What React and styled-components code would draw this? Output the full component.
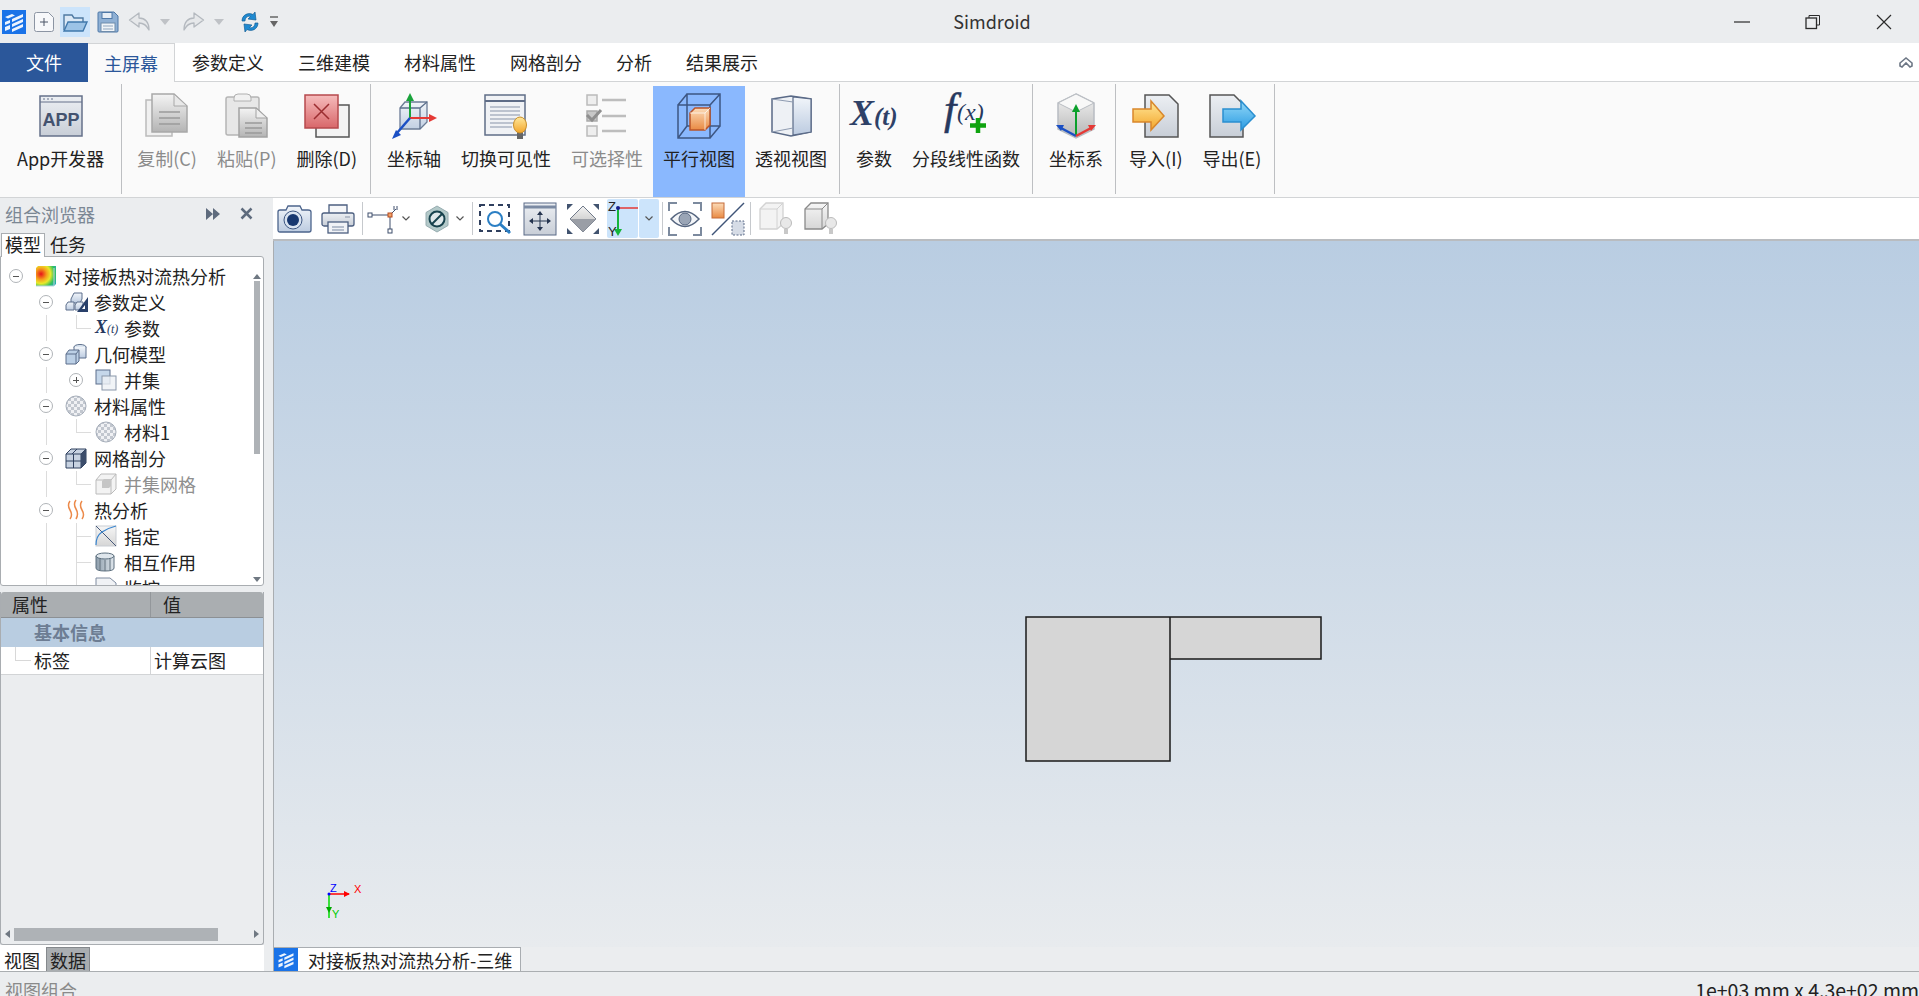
import React from "react";
import styled, { createGlobalStyle } from "styled-components";

const FONT = `"Noto Sans CJK SC", "Noto Sans", sans-serif`;

const GlobalStyle = createGlobalStyle`
    html, body { margin: 0; padding: 0; height: 100%; overflow: hidden; background: #ebedef; }
    #root { height: 100%; }
    * { box-sizing: border-box; }
`;

// icons
const Ico = styled.svg`
    display: block;
    flex: none;
    overflow: visible;
`;
const DefsSvg = styled.svg`
    position: absolute;
    width: 0;
    height: 0;
`;
const Grad = ({ id, from, to, x2 = 0, y2 = 1 }) => (
    <linearGradient id={id} x1="0" y1="0" x2={x2} y2={y2}>
        <stop offset="0" stopColor={from} />
        <stop offset="1" stopColor={to} />
    </linearGradient>
);
const SharedDefs = () => (
    <DefsSvg aria-hidden="true">
        <defs>
            <Grad id="gGlass" from="#f1f5fa" to="#bccbe0" />
            <Grad id="gGrey" from="#f4f4f4" to="#b4b4b4" />
            <Grad id="gLight" from="#f6f6f6" to="#d6d6d6" />
            <Grad id="gOrange" from="#fcdcb9" to="#e98a43" />
            <Grad id="gRed" from="#f6bcbc" to="#d8676a" />
            <Grad id="gYellow" from="#ffe89a" to="#f3a52a" />
            <Grad id="gSky" from="#92d8f8" to="#2b9be2" />
            <Grad id="gDoc" from="#eceff3" to="#c8ced7" />
            <Grad id="gCyl" from="#8d9dab" to="#dfe6ec" x2={1} y2={0} />
            <radialGradient id="gHeat" cx="0.25" cy="0.4" r="0.95">
                <stop offset="0" stopColor="#e8121a" />
                <stop offset="0.3" stopColor="#f5a11c" />
                <stop offset="0.5" stopColor="#e9e82a" />
                <stop offset="0.72" stopColor="#35c25a" />
                <stop offset="1" stopColor="#1c9fd8" />
            </radialGradient>
        </defs>
    </DefsSvg>
);

const AppLogo = ({ size = 24 }) => (
    <Ico width={size} height={size} viewBox="0 0 24 24">
        <rect width="24" height="24" fill="#1a73e8" />
        <path d="M3 7l7-3 3 1.500-7 3zM3 12l5-2v3l-5 2zM3 17l5-2v4l-5 2z" fill="#fff" opacity=".92" />
        <path d="M10 9l11-5v3l-11 5zM10 14l11-5v3l-11 5zM10 19l11-5v3l-11 5z" fill="#fff" opacity=".92" />
    </Ico>
);
const NewDocIcon = () => (
    <Ico width="22" height="22" viewBox="0 0 22 22">
        <path d="M1.500 3.500q0-2 2-2h12l5 5v12q0 2-2 2h-15q-2 0-2-2z" fill="#f7f8fa" stroke="#8c95a3" />
        <path d="M11 7v8M7 11h8" stroke="#4b5566" />
    </Ico>
);
const OpenIcon = () => (
    <Ico width="26" height="22" viewBox="0 0 26 22">
        <path d="M2 19V4h8l2 3h9v4" fill="#dbe8f5" stroke="#4f7aa3" strokeWidth="1.400" />
        <path d="M2 20l4-9h19l-4 9z" fill="#9cc3e6" stroke="#3f78ac" strokeWidth="1.400" />
    </Ico>
);
const SaveIcon = () => (
    <Ico width="22" height="22" viewBox="0 0 22 22">
        <path d="M1 2q0-1 1-1h15l4 4v15q0 1-1 1H2q-1 0-1-1z" fill="#8fb0d4" stroke="#4f79a8" />
        <rect x="5" y="1.500" width="10" height="6" fill="#e7eef6" stroke="#4f79a8" />
        <rect x="4" y="12" width="14" height="8.500" fill="#f0f4f8" stroke="#6e8cab" />
        <path d="M6 15h10M6 18h10" stroke="#8fa5bd" />
    </Ico>
);
const UndoIcon = ({ flip }) => (
    <Ico width="23" height="22" viewBox="0 0 23 22" style={flip ? { transform: "scaleX(-1)" } : undefined}>
        <path d="M11 2L1.500 9l9.500 7v-4c4 0 7 1 10 7 0-8-4-12-10-12z" fill="#e6e8ea" stroke="#b4b9bf" strokeWidth="1.300" strokeLinejoin="round" />
    </Ico>
);
const RefreshIcon = () => (
    <Ico width="20" height="24" viewBox="0 0 20 24">
        <path d="M2 11C2 5 8 2 13 4.500L15 2l1 8-8-1 2.500-2.500C8 5.500 5 7.500 5 11z" fill="#1f8ad1" stroke="#155f95" strokeWidth=".7" />
        <path d="M18 13c0 6-6 9-11 6.500L5 22l-1-8 8 1-2.500 2.500C12 18.500 15 16.500 15 13z" fill="#1f8ad1" stroke="#155f95" strokeWidth=".7" />
    </Ico>
);
const MoreIcon = () => (
    <Ico width="10" height="14" viewBox="0 0 10 14">
        <path d="M1 2h8" stroke="#666" strokeWidth="1.500" />
        <path d="M1 6h8l-4 6z" fill="#666" />
    </Ico>
);
const DropTri = () => (
    <Ico width="10" height="8" viewBox="0 0 10 8">
        <path d="M0 1h10L5 7z" fill="#bfc2c6" />
    </Ico>
);

const RibbonApp = () => (
    <Ico width="48" height="48" viewBox="0 0 48 48">
        <rect x="3" y="4" width="42" height="40" fill="url(#gDoc)" stroke="#65718a" strokeWidth="1.500" />
        <path d="M3 10h42" stroke="#65718a" />
        <path d="M6 7h2M10 7h2M14 7h2" stroke="#65718a" />
        <text x="24" y="34" textAnchor="middle" fontFamily="Liberation Sans" fontWeight="700" fontSize="18" fill="#43526f">APP</text>
    </Ico>
);
const RibbonCopy = () => (
    <Ico width="48" height="48" viewBox="0 0 48 48">
        <path d="M3 8h26v36H3z" fill="#f0f0f0" stroke="#bbb" strokeWidth="1.500" />
        <path d="M9 2h22l13 12v26H9z" fill="url(#gGrey)" stroke="#a8a8a8" strokeWidth="1.500" />
        <path d="M31 2v12h13z" fill="#e8e8e8" stroke="#a8a8a8" />
        <path d="M16 20h21M16 26h21M16 32h21" stroke="#9a9a9a" strokeWidth="1.500" />
    </Ico>
);
const RibbonPaste = () => (
    <Ico width="48" height="48" viewBox="0 0 48 48">
        <rect x="3" y="5" width="33" height="38" rx="2" fill="#e7e7e7" stroke="#b5b5b5" strokeWidth="1.500" />
        <path d="M11 6q0-4 4-4h9q4 0 4 4v3H11z" fill="#f1f1f1" stroke="#b0b0b0" />
        <path d="M16 16h17l11 10v19H16z" fill="url(#gGrey)" stroke="#a2a2a2" strokeWidth="1.500" />
        <path d="M33 16v10h11z" fill="#eee" stroke="#a2a2a2" />
        <path d="M22 31h17M22 36h17M22 41h17" stroke="#999" strokeWidth="1.300" />
    </Ico>
);
const RibbonDelete = () => (
    <Ico width="48" height="48" viewBox="0 0 48 48">
        <rect x="13" y="13" width="33" height="32" fill="#f3f3f3" stroke="#555" strokeWidth="1.500" />
        <rect x="2" y="3" width="33" height="33" fill="url(#gRed)" stroke="#b64a4d" strokeWidth="1.500" />
        <path d="M11 12l15 15M26 12L11 27" stroke="#9b2d30" strokeWidth="1.500" />
    </Ico>
);
const RibbonAxis = () => (
    <Ico width="48" height="48" viewBox="0 0 48 48">
        <path d="M10 16l5-6h22v20l-7 7H10z" fill="url(#gGlass)" stroke="#5c6f8c" strokeWidth="1.300" opacity=".9" />
        <path d="M10 16h20v21M30 16l7-6" fill="none" stroke="#5c6f8c" strokeWidth="1.300" />
        <path d="M20 26V8" stroke="#19a33b" strokeWidth="2" />
        <path d="M20 1l-4 8h8z" fill="#19a33b" />
        <path d="M20 26h21" stroke="#e53935" strokeWidth="2" />
        <path d="M47 26l-8-4v8z" fill="#e53935" />
        <path d="M20 26L7 41" stroke="#1a4fc4" strokeWidth="2.500" />
        <path d="M2 47l9-4-5-5z" fill="#1a4fc4" />
    </Ico>
);
const RibbonVisibility = () => (
    <Ico width="48" height="48" viewBox="0 0 48 48">
        <rect x="3" y="3" width="40" height="40" fill="#f0f2f5" stroke="#5f6d87" strokeWidth="1.500" />
        <path d="M3 9h40" stroke="#5f6d87" strokeWidth="2" />
        <path d="M8 15h30M8 19h30M8 23h30M8 27h30M8 31h24M8 35h22" stroke="#aab4c2" strokeWidth="1.500" />
        <path d="M35 40h6v7h-6z" fill="#666" />
        <ellipse cx="38" cy="33" rx="6.500" ry="8" fill="url(#gYellow)" stroke="#c98f2a" />
    </Ico>
);
const RibbonSelectable = () => (
    <Ico width="48" height="48" viewBox="0 0 48 48">
        <rect x="4" y="3" width="10" height="10" fill="#eee" stroke="#bbb" strokeWidth="1.500" />
        <rect x="4" y="19" width="10" height="10" fill="#c8c8c8" stroke="#aaa" strokeWidth="1.500" />
        <path d="M4 23l5 5 9-10" fill="none" stroke="#8f8f8f" strokeWidth="3" />
        <rect x="4" y="34" width="10" height="10" fill="#eee" stroke="#bbb" strokeWidth="1.500" />
        <path d="M19 8h24M19 24h24M19 39h24" stroke="#bdbdbd" strokeWidth="2.500" />
    </Ico>
);
const RibbonParallel = () => (
    <Ico width="48" height="48" viewBox="0 0 48 48">
        <g fill="none" stroke="#3d5683" strokeWidth="1.500">
            <path d="M12 2h33v32H12zM3 13h32v33H3zM3 13l9-11M35 13l10-11M3 46l9-12M35 46l10-12" />
        </g>
        <path d="M15 21l5-5h15v17l-5 5H15z" fill="url(#gOrange)" stroke="#b9542a" strokeWidth="1.500" />
        <path d="M15 21h15v17M30 21l5-5" fill="none" stroke="#fff" strokeWidth="1" opacity=".7" />
    </Ico>
);
const RibbonPerspective = () => (
    <Ico width="48" height="48" viewBox="0 0 48 48">
        <path d="M5 7l19-3 20 3v33l-20 4-19-4z" fill="#eef1f5" stroke="#5a6a87" strokeWidth="1.500" />
        <path d="M26 5v38l18-3V7z" fill="url(#gGlass)" stroke="#5a6a87" strokeWidth="1.200" />
        <path d="M5 7l21 3M5 40l21-4" stroke="#8e9bb1" />
    </Ico>
);
const RibbonXt = () => (
    <Ico width="48" height="48" viewBox="0 0 48 48">
        <text x="0" y="33" fontFamily="Liberation Serif" fontStyle="italic" fontWeight="700" fontSize="36" fill="#2e4167">X</text>
        <text x="24" y="33" fontFamily="Liberation Serif" fontStyle="italic" fontWeight="700" fontSize="25" fill="#2e4167">(t)</text>
    </Ico>
);
const RibbonFx = () => (
    <Ico width="48" height="48" viewBox="0 0 48 48">
        <text x="2" y="32" fontFamily="Liberation Serif" fontStyle="italic" fontSize="44" fill="#26395f" stroke="#26395f" strokeWidth=".5">f</text>
        <text x="15" y="28" fontFamily="Liberation Serif" fontStyle="italic" fontSize="24" fill="#26395f">(x)</text>
        <path d="M36 26v15M28 33.500h16" stroke="#0fa30f" strokeWidth="4.500" />
    </Ico>
);
const RibbonCoord = () => (
    <Ico width="48" height="48" viewBox="0 0 48 48">
        <path d="M24 2l18 9v26l-18 9-18-9V11z" fill="url(#gGrey)" stroke="#b8bcc2" strokeWidth="1.500" />
        <path d="M6 11l18 9 18-9-18-9z" fill="#f8f8f8" stroke="#b8bcc2" />
        <path d="M24 44V18" stroke="#0ca02c" strokeWidth="2" />
        <path d="M24 12l-4 8h8z" fill="#0ca02c" />
        <path d="M24 44L9 36" stroke="#1a4fc4" strokeWidth="2.500" />
        <path d="M4 33l8 0-3 6z" fill="#1a4fc4" />
        <path d="M24 44l15-8" stroke="#e53935" strokeWidth="2.500" />
        <path d="M44 33l-8 0 3 6z" fill="#e53935" />
    </Ico>
);
const RibbonImport = () => (
    <Ico width="48" height="48" viewBox="0 0 48 48">
        <path d="M13 3h24l9 9v33H13z" fill="url(#gDoc)" stroke="#555" strokeWidth="1.500" />
        <path d="M1 17h18V9l13 15-13 14v-8H1z" fill="url(#gYellow)" stroke="#d9872b" strokeWidth="1.500" />
    </Ico>
);
const RibbonExport = () => (
    <Ico width="48" height="48" viewBox="0 0 48 48">
        <path d="M2 3h24l9 9v33H2z" fill="url(#gDoc)" stroke="#555" strokeWidth="1.500" />
        <path d="M15 17h18V9l14 15-14 14v-8H15z" fill="url(#gSky)" stroke="#2a8fd0" strokeWidth="1.500" />
    </Ico>
);

const CameraIcon = () => (
    <Ico width="34" height="28" viewBox="0 0 34 28">
        <path d="M1 7q0-2 2-2h6l2-4h12l2 4h6q3 0 3 2v18q0 2-2 2H3q-2 0-2-2z" fill="url(#gGlass)" stroke="#4c648c" strokeWidth="1.300" />
        <circle cx="16" cy="15" r="9" fill="#d9e3f0" stroke="#3c5580" />
        <circle cx="16" cy="15" r="6" fill="#17376f" />
    </Ico>
);
const PrinterIcon = () => (
    <Ico width="34" height="30" viewBox="0 0 34 30">
        <path d="M8 9V1h18v8" fill="#f6f7f9" stroke="#4c5f80" strokeWidth="1.300" />
        <rect x="1" y="9" width="32" height="13" rx="2" fill="url(#gDoc)" stroke="#4c5f80" strokeWidth="1.300" />
        <rect x="7" y="18" width="20" height="11" fill="#f0f2f6" stroke="#4c5f80" strokeWidth="1.300" />
        <path d="M11 23h12M11 26h12" stroke="#7a8aa3" />
        <path d="M24 13h5" stroke="#8793a7" />
    </Ico>
);
const PickIcon = () => (
    <Ico width="31" height="28" viewBox="0 0 31 28">
        <path d="M3 10h20M23 10v14M23 10l6-6" stroke="#3e4f6d" fill="none" />
        <rect x="1" y="8" width="4" height="4" fill="#fff" stroke="#3e4f6d" />
        <rect x="21" y="24" width="4" height="4" fill="#fff" stroke="#3e4f6d" />
        <rect x="21" y="8" width="4" height="4" fill="#f0a468" stroke="#b5491f" />
        <path d="M27 1v4M30 1v4" stroke="#3e4f6d" />
    </Ico>
);
const HexIcon = () => (
    <Ico width="24" height="28" viewBox="0 0 24 28">
        <path d="M12 1l11 6.500v13L12 27 1 20.500v-13z" fill="#b3c9c9" stroke="#96acb0" />
        <circle cx="12" cy="14" r="7.500" fill="#dfe8ea" stroke="#17424d" strokeWidth="2" />
        <path d="M7 19L17 9" stroke="#17424d" strokeWidth="2" />
    </Ico>
);
const ZoomRectIcon = () => (
    <Ico width="34" height="32" viewBox="0 0 34 32">
        <rect x="1" y="2" width="29" height="26" fill="none" stroke="#2f3f5e" strokeWidth="2" strokeDasharray="5 4" />
        <circle cx="16" cy="16" r="7" fill="#fff" stroke="#2b7fc4" strokeWidth="2" />
        <path d="M21 21l10 9" stroke="#2b7fc4" strokeWidth="3" />
    </Ico>
);
const PanIcon = () => (
    <Ico width="34" height="34" viewBox="0 0 34 34">
        <rect x="1" y="1" width="32" height="32" fill="url(#gDoc)" stroke="#5a6a87" />
        <path d="M1 5h32" stroke="#7b8aa3" strokeWidth="3" />
        <path d="M17 9l-3 4h6zM17 29l-3-4h6zM6 19l4-3v6zM28 19l-4-3v6z" fill="#25344f" />
        <path d="M17 12v14M9 19h16" stroke="#25344f" />
    </Ico>
);
const FitIcon = () => (
    <Ico width="36" height="34" viewBox="0 0 36 34">
        <path d="M18 4l13 13-13 13L5 17z" fill="url(#gGrey)" stroke="#707a8a" />
        <path d="M5 17h26L18 30z" fill="#9a9ea6" />
        <path d="M2 2l6 0-6 6zM34 2l-6 0 6 6zM2 32l6 0-6-6zM34 32l-6 0 6-6z" fill="#41536f" />
    </Ico>
);
const TriadBtnIcon = () => (
    <Ico width="31" height="38" viewBox="0 0 31 38">
        <path d="M11 8h20" stroke="#e53935" strokeWidth="1.500" />
        <path d="M11 8v23" stroke="#14b53a" strokeWidth="2" />
        <path d="M11 36l-4-7h8z" fill="#14b53a" />
        <circle cx="11" cy="8" r="2" fill="#15208f" />
        <text x="1" y="11" fontFamily="Liberation Sans" fontSize="13" fill="#222">Z</text>
        <text x="1" y="36" fontFamily="Liberation Sans" fontSize="13" fill="#222">Y</text>
    </Ico>
);
const EyeIcon = () => (
    <Ico width="34" height="34" viewBox="0 0 34 34">
        <path d="M1 9V1h8M25 1h8v8M33 25v8h-8M9 33H1v-8" fill="none" stroke="#7c8a9e" strokeWidth="2" />
        <path d="M3 17q14-15 28 0-14 15-28 0z" fill="#f3f5f8" stroke="#55657f" strokeWidth="1.500" />
        <circle cx="17" cy="17" r="6" fill="#9aa5b6" stroke="#55657f" />
    </Ico>
);
const OrthoSwapIcon = () => (
    <Ico width="34" height="34" viewBox="0 0 34 34">
        <rect x="1" y="1" width="12" height="15" fill="url(#gOrange)" stroke="#c46a38" />
        <path d="M33 1L1 33" stroke="#3f5478" strokeWidth="1.500" />
        <rect x="21" y="19" width="12" height="14" fill="#d6dce6" stroke="#5a6a87" strokeDasharray="2 1.500" />
    </Ico>
);
const LightBox = ({ dark }) => (
    <Ico width="34" height="34" viewBox="0 0 34 34">
        <path d="M1 7l6-6h17v21l-6 5H1z" fill={dark ? "url(#gLight)" : "#f3f3f3"} stroke={dark ? "#8a8a8a" : "#d2d2d2"} strokeWidth="1.300" />
        <path d="M1 7h17v20M18 7l6-6" fill="none" stroke={dark ? "#8a8a8a" : "#d2d2d2"} />
        <circle cx="27" cy="21" r="5.500" fill="#e8e8e8" stroke="#bbb" />
        <path d="M25 27h4v5h-4z" fill="#c8c8c8" />
    </Ico>
);
const Chevron = () => (
    <Ico width="8" height="5" viewBox="0 0 8 5">
        <path d="M.5.5L4 4 7.500.5" fill="none" stroke="#555" strokeWidth="1.200" />
    </Ico>
);

const TreeHeat = () => (
    <Ico width="22" height="22" viewBox="0 0 22 22">
        <path d="M1 3l2-2h18v18l-2 2H1z" fill="url(#gHeat)" />
        <path d="M1 21h18V3" fill="none" stroke="#b9d5dd" />
    </Ico>
);
const TreeParam = () => (
    <Ico width="24" height="22" viewBox="0 0 24 22">
        <path d="M6 8l3-6h8v6l-2 4H6z" fill="url(#gGlass)" stroke="#5c6f8c" />
        <path d="M1 14l2-3h6v8H1zM10 14l2-3h6v8h-8z" fill="url(#gGlass)" stroke="#5c6f8c" />
        <path d="M23 6v15h-11z" fill="#29406a" />
        <path d="M20 14v4h-3z" fill="#fff" />
    </Ico>
);
const TreeGeometry = () => (
    <Ico width="22" height="22" viewBox="0 0 22 22">
        <ellipse cx="15" cy="4" rx="6" ry="2.500" fill="#dbe5f0" stroke="#5c6f8c" />
        <path d="M9 4v11h12V4" fill="url(#gGlass)" stroke="#5c6f8c" />
        <path d="M1 11l3-4h10v11l-3 3H1z" fill="#bcd0e6" stroke="#5c6f8c" />
        <path d="M1 11h10v10M11 11l3-4" fill="none" stroke="#5c6f8c" />
    </Ico>
);
const TreeUnion = () => (
    <Ico width="22" height="22" viewBox="0 0 22 22">
        <rect x="1" y="1" width="14" height="14" fill="#c5d7ea" stroke="#5c6f8c" />
        <rect x="7" y="7" width="14" height="14" fill="#eef1f5" fillOpacity=".8" stroke="#8a97aa" />
    </Ico>
);
const TreeMaterial = () => (
    <Ico width="22" height="22" viewBox="0 0 22 22">
        <pattern id="checks" width="6" height="6" patternUnits="userSpaceOnUse">
            <rect width="6" height="6" fill="#f0f1f4" />
            <rect width="3" height="3" fill="#c2c7cf" />
            <rect x="3" y="3" width="3" height="3" fill="#c2c7cf" />
        </pattern>
        <circle cx="11" cy="11" r="10" fill="url(#checks)" stroke="#a5adb9" />
    </Ico>
);
const TreeMesh = () => (
    <Ico width="22" height="22" viewBox="0 0 22 22">
        <path d="M1 7l5-5h15v14l-5 5H1z" fill="#c7d2e1" stroke="#2f405f" />
        <path d="M1 7h15v14M16 7l5-5M8.500 7v14M1 14h15M7 7l5-5" fill="none" stroke="#2f405f" />
        <path d="M16 7l5-5v14l-5 5z" fill="#3c4d6b" />
    </Ico>
);
const TreeMeshUnion = () => (
    <Ico width="22" height="22" viewBox="0 0 22 22">
        <path d="M1 7l5-6h15v15l-5 5H1z" fill="#f3f3f3" stroke="#bbb" />
        <path d="M1 7h15v14M16 7l5-6" fill="none" stroke="#bbb" />
        <path d="M7 8l2-2h7v7l-2 2H7z" fill="#c6c6c6" />
    </Ico>
);
const TreeFlame = () => (
    <Ico width="22" height="22" viewBox="0 0 22 22">
        <g fill="none" stroke="#ec8a4a" strokeWidth="1.500">
            <path d="M5 2q-3 4 0 9t0 9" />
            <path d="M11 1q-3 4 0 9t0 10" />
            <path d="M17 2q-3 4 0 9t0 9" />
        </g>
    </Ico>
);
const TreeAssign = () => (
    <Ico width="22" height="22" viewBox="0 0 22 22">
        <rect x="1" y="1" width="20" height="20" fill="url(#gLight)" stroke="#c9cdd3" />
        <path d="M1 1l20 20" stroke="#46597a" />
        <path d="M1 20q0-9 6-13t14-6" fill="none" stroke="#3b86cf" strokeWidth="1.200" />
    </Ico>
);
const TreeCylinder = () => (
    <Ico width="20" height="20" viewBox="0 0 20 20">
        <path d="M1 4v12q0 3 9 3t9-3V4" fill="url(#gCyl)" stroke="#5c6f7e" />
        <ellipse cx="10" cy="4" rx="9" ry="3" fill="#dfe6ec" stroke="#5c6f7e" />
        <path d="M5 7v11M10 8v11M15 7v11" stroke="#64737f" />
    </Ico>
);
const TreeMonitor = () => (
    <Ico width="22" height="22" viewBox="0 0 22 22">
        <path d="M1 1h14l6 5v15H1z" fill="#f0f2f5" stroke="#7e8ba0" />
        <path d="M8 8l2 4 3-3" fill="none" stroke="#d9534f" />
    </Ico>
);
const TreeXt = () => (
    <Ico width="24" height="20" viewBox="0 0 24 20">
        <text x="0" y="15" fontFamily="Liberation Serif" fontStyle="italic" fontWeight="700" fontSize="18" fill="#26395f">X</text>
        <text x="12" y="15" fontFamily="Liberation Serif" fontStyle="italic" fontSize="12" fill="#26395f">(t)</text>
    </Ico>
);
const CloseIcon = () => (
    <Ico width="16" height="16" viewBox="0 0 16 16">
        <path d="M1 1l14 14M15 1L1 15" stroke="#2b2b2b" strokeWidth="1.200" />
    </Ico>
);
const RestoreIcon = () => (
    <Ico width="16" height="16" viewBox="0 0 16 16">
        <rect x="1" y="4" width="10.500" height="10.500" fill="none" stroke="#2b2b2b" strokeWidth="1.300" />
        <path d="M4 4V1.500h10.500V11H11.500" fill="none" stroke="#2b2b2b" />
    </Ico>
);
const MinimizeIcon = () => (
    <Ico width="16" height="16" viewBox="0 0 16 16">
        <path d="M0 8h16" stroke="#2b2b2b" strokeWidth="1.200" />
    </Ico>
);

// data
const RIBBON_GROUPS = [
    { pad: "0 8px 0 7px", buttons: [{ label: "App开发器", icon: <RibbonApp /> }] },
    {
        pad: "0 4px 0 5px",
        buttons: [
            { label: "复制(C)", icon: <RibbonCopy />, disabled: true },
            { label: "粘贴(P)", icon: <RibbonPaste />, disabled: true },
            { label: "删除(D)", icon: <RibbonDelete /> },
        ],
    },
    {
        buttons: [
            { label: "坐标轴", icon: <RibbonAxis /> },
            { label: "切换可见性", icon: <RibbonVisibility /> },
            { label: "可选择性", icon: <RibbonSelectable />, disabled: true },
            { label: "平行视图", icon: <RibbonParallel />, active: true },
            { label: "透视视图", icon: <RibbonPerspective /> },
        ],
    },
    {
        buttons: [
            { label: "参数", icon: <RibbonXt /> },
            { label: "分段线性函数", icon: <RibbonFx /> },
        ],
    },
    { buttons: [{ label: "坐标系", icon: <RibbonCoord /> }] },
    {
        pad: "0 4px 0 3px",
        buttons: [
            { label: "导入(I)", icon: <RibbonImport /> },
            { label: "导出(E)", icon: <RibbonExport /> },
        ],
    },
];

const MENU_TABS = ["参数定义", "三维建模", "材料属性", "网格剖分", "分析", "结果展示"];

const TREE = [
    { guides: ["minus"], icon: <TreeHeat />, label: "对接板热对流热分析" },
    { guides: ["", "minus"], icon: <TreeParam />, label: "参数定义" },
    { guides: ["", "v", "l"], icon: <TreeXt />, label: "参数" },
    { guides: ["", "minus"], icon: <TreeGeometry />, label: "几何模型" },
    { guides: ["", "v", "plus"], icon: <TreeUnion />, label: "并集" },
    { guides: ["", "minus"], icon: <TreeMaterial />, label: "材料属性" },
    { guides: ["", "v", "l"], icon: <TreeMaterial />, label: "材料1" },
    { guides: ["", "minus"], icon: <TreeMesh />, label: "网格剖分" },
    { guides: ["", "v", "l"], icon: <TreeMeshUnion />, label: "并集网格", dim: true },
    { guides: ["", "minus"], icon: <TreeFlame />, label: "热分析" },
    { guides: ["", "v", "t"], icon: <TreeAssign />, label: "指定" },
    { guides: ["", "v", "t"], icon: <TreeCylinder />, label: "相互作用" },
    { guides: ["", "v", "t"], icon: <TreeMonitor />, label: "监控" },
];

function App() {
    return (
        <Page>
            <GlobalStyle />
            <SharedDefs />
            <TitleBar>
                <QuickAccess>
                    <QuickBtn $w={24} $ml={2}><AppLogo /></QuickBtn>
                    <QuickBtn $w={22} $ml={7}><NewDocIcon /></QuickBtn>
                    <QuickBtn $w={30} $h={30} $ml={5} $hot><OpenIcon /></QuickBtn>
                    <QuickBtn $w={22} $ml={7}><SaveIcon /></QuickBtn>
                    <QuickBtn $w={23} $ml={9}><UndoIcon /></QuickBtn>
                    <QuickBtn $w={10} $ml={9}><DropTri /></QuickBtn>
                    <QuickBtn $w={23} $ml={12}><UndoIcon flip /></QuickBtn>
                    <QuickBtn $w={10} $ml={9}><DropTri /></QuickBtn>
                    <QuickSep />
                    <QuickBtn $w={20} $ml={8}><RefreshIcon /></QuickBtn>
                    <QuickBtn $w={10} $ml={9}><MoreIcon /></QuickBtn>
                </QuickAccess>
                <WindowTitle>Simdroid</WindowTitle>
                <WindowControls>
                    <WindowBtn><MinimizeIcon /></WindowBtn>
                    <WindowBtn><RestoreIcon /></WindowBtn>
                    <WindowBtn><CloseIcon /></WindowBtn>
                </WindowControls>
            </TitleBar>

            <MenuBar>
                <FileTab>文件</FileTab>
                <HomeTab>主屏幕</HomeTab>
                {MENU_TABS.map((t) => <MenuTab key={t}>{t}</MenuTab>)}
                <Collapse>
                    <Ico width="14" height="12" viewBox="0 0 14 12">
                        <path d="M1 7l6-5 6 5v3l-2 1-4-4-4 4-2-1z" fill="none" stroke="#6d7785" strokeWidth="1.600" />
                    </Ico>
                </Collapse>
            </MenuBar>

            <Ribbon>
                {RIBBON_GROUPS.map((g, i) => (
                    <RibbonGroup key={i} $pad={g.pad}>
                        {g.buttons.map((b) => (
                            <RibbonButton key={b.label} $active={b.active} $disabled={b.disabled}>
                                <RibbonIconBox>{b.icon}</RibbonIconBox>
                                <RibbonLabel>{b.label}</RibbonLabel>
                            </RibbonButton>
                        ))}
                    </RibbonGroup>
                ))}
            </Ribbon>

            <Main>
                <LeftColumn>
                    <PanelHeader>
                        <PanelTitle>组合浏览器</PanelTitle>
                        <PanelAction>
                            <Ico width="16" height="14" viewBox="0 0 16 14">
                                <path d="M1 1l7 6-7 6zM8 1l7 6-7 6z" fill="#5e6b7d" />
                            </Ico>
                        </PanelAction>
                        <PanelAction>
                            <Ico width="13" height="13" viewBox="0 0 13 13">
                                <path d="M1.500 1.500l10 10M11.500 1.500l-10 10" stroke="#5e6b7d" strokeWidth="2.500" />
                            </Ico>
                        </PanelAction>
                    </PanelHeader>
                    <TabStrip>
                        <PanelTab $active>模型</PanelTab>
                        <PanelTab>任务</PanelTab>
                    </TabStrip>
                    <TreeBox>
                        <TreeList>
                            {TREE.map((n) => (
                                <TreeRow key={n.label + n.guides.length} $dim={n.dim}>
                                    {n.guides.map((g, i) => (g === "minus" || g === "plus"
                                        ? <GuideCell key={i}><Toggle $plus={g === "plus"} /></GuideCell>
                                        : <GuideCell key={i} $kind={g} />))}
                                    <TreeIconSlot>{n.icon}</TreeIconSlot>
                                    {n.label}
                                </TreeRow>
                            ))}
                        </TreeList>
                        <VScroll>
                            <ScrollArrow $dir="up" />
                            <VThumb />
                            <ScrollArrow $dir="down" />
                        </VScroll>
                    </TreeBox>
                    <PropBox>
                        <PropHead>
                            <PropHeadCell>属性</PropHeadCell>
                            <PropHeadCell $last>值</PropHeadCell>
                        </PropHead>
                        <PropSection>基本信息</PropSection>
                        <PropRow>
                            <PropKey>标签</PropKey>
                            <PropValue>计算云图</PropValue>
                        </PropRow>
                        <HScroll>
                            <ScrollArrow $dir="left" />
                            <HThumb />
                            <ScrollArrow $dir="right" />
                        </HScroll>
                    </PropBox>
                    <BottomTabs>
                        <BottomTab>视图</BottomTab>
                        <BottomTab $active>数据</BottomTab>
                    </BottomTabs>
                </LeftColumn>

                <RightColumn>
                    <Toolbar>
                        <ToolBtn $w={34} $ml={4}><CameraIcon /></ToolBtn>
                        <ToolBtn $w={34} $ml={10}><PrinterIcon /></ToolBtn>
                        <ToolSep $ml={7} />
                        <ToolBtn $w={31} $ml={4}><PickIcon /></ToolBtn>
                        <ToolBtn $w={8} $ml={4}><Chevron /></ToolBtn>
                        <ToolBtn $w={24} $ml={15}><HexIcon /></ToolBtn>
                        <ToolBtn $w={8} $ml={7}><Chevron /></ToolBtn>
                        <ToolSep $ml={8} />
                        <ToolBtn $w={34} $ml={6}><ZoomRectIcon /></ToolBtn>
                        <ToolBtn $w={34} $ml={10}><PanIcon /></ToolBtn>
                        <ToolBtn $w={36} $ml={8}><FitIcon /></ToolBtn>
                        <ToolBtn $w={31} $ml={6} $on><TriadBtnIcon /></ToolBtn>
                        <ToolBtn $w={20} $ml={1} $on><Chevron /></ToolBtn>
                        <ToolSep $ml={3} />
                        <ToolBtn $w={34} $ml={5}><EyeIcon /></ToolBtn>
                        <ToolBtn $w={34} $ml={9}><OrthoSwapIcon /></ToolBtn>
                        <ToolSep $ml={5} />
                        <ToolBtn $w={34} $ml={8}><LightBox /></ToolBtn>
                        <ToolBtn $w={34} $ml={11}><LightBox dark /></ToolBtn>
                    </Toolbar>
                    <Viewport>
                        <ModelShape width="297" height="146" viewBox="0 0 297 146">
                            <path d="M1 1h144v144H1zM145 1h151v42H145z" fill="#d6d6d6" stroke="#1a1a1a" strokeWidth="1.500" />
                        </ModelShape>
                        <Triad width="44" height="44" viewBox="0 0 44 44">
                            <path d="M5 13h20" stroke="#f00" strokeWidth="1.500" />
                            <path d="M26 13l-6-3v6z" fill="#f00" />
                            <path d="M5 13v24" stroke="#0d0" strokeWidth="1.500" />
                            <path d="M5 32l-3-6h6z" fill="#0a0" />
                            <circle cx="5" cy="13" r="1.500" fill="#00f" />
                            <text x="6" y="11" fontFamily="Liberation Sans" fontSize="11" fill="#00f">Z</text>
                            <text x="30" y="12" fontFamily="Liberation Sans" fontSize="11" fill="#f00">X</text>
                            <text x="8" y="37" fontFamily="Liberation Sans" fontSize="11" fill="#0c0">Y</text>
                        </Triad>
                    </Viewport>
                    <DocTabBar>
                        <DocTab>
                            <DocTabIcon><AppLogo size={20} /></DocTabIcon>
                            <DocTabText>对接板热对流热分析-三维</DocTabText>
                        </DocTab>
                    </DocTabBar>
                </RightColumn>
            </Main>

            <StatusBar>
                <StatusLeft>视图组合</StatusLeft>
                <StatusRight>1e+03 mm x 4.3e+02 mm</StatusRight>
            </StatusBar>
        </Page>
    );
}

const Page = styled.div`
    display: flex;
    flex-direction: column;
    height: 996px;
    width: 1919px;
    overflow: hidden;
    background: #ebedef;
    color: #222;
    font-family: ${FONT};
    font-size: 18px;
`;

const TitleBar = styled.header`
    display: flex;
    align-items: center;
    height: 43px;
    background: #ebedef;
`;
const QuickAccess = styled.div`
    display: flex;
    align-items: center;
    width: 278px;
    height: 100%;
`;
const QuickBtn = styled.div`
    display: flex;
    align-items: center;
    justify-content: center;
    flex: none;
    width: ${(p) => p.$w}px;
    height: ${(p) => p.$h || 26}px;
    margin-left: ${(p) => p.$ml}px;
    background: ${(p) => (p.$hot ? "#cce4fb" : "transparent")};
`;
const QuickSep = styled.div`
    width: 1px;
    height: 28px;
    margin-left: 8px;
    background: #c6c9cd;
`;
const WindowTitle = styled.div`
    flex: 1;
    padding-bottom: 2px;
    text-align: center;
    font-size: 18px;
    line-height: 24px;
    color: #333;
`;
const WindowControls = styled.div`
    display: flex;
    width: 213px;
`;
const WindowBtn = styled.div`
    display: flex;
    align-items: center;
    justify-content: center;
    width: 71px;
    height: 43px;
`;

const MenuBar = styled.nav`
    display: flex;
    align-items: stretch;
    height: 39px;
    background: #fff;
    border-bottom: 1px solid #d2d4d6;
    line-height: 38px;
`;
const FileTab = styled.div`
    width: 88px;
    margin-bottom: -1px;
    text-align: center;
    color: #fff;
    background: #2b579a;
`;
const HomeTab = styled.div`
    width: 87px;
    margin-bottom: -1px;
    text-align: center;
    color: #2b579a;
    background: #fafafa;
    border: 1px solid #d2d4d6;
    border-bottom: none;
    border-left: none;
`;
const MenuTab = styled.div`
    padding: 0 17px;
`;
const Collapse = styled.div`
    display: flex;
    align-items: center;
    margin-left: auto;
    padding-right: 6px;
`;

const Ribbon = styled.section`
    display: flex;
    height: 116px;
    padding: 4px 0 0 0;
    background: #fafafa;
    border-bottom: 1px solid #d2d4d6;
`;
const RibbonGroup = styled.div`
    display: flex;
    padding: ${(p) => p.$pad || "0 3px 0 6px"};
    position: relative;
    &::after {
        content: "";
        position: absolute;
        right: 0;
        top: -2px;
        bottom: 3px;
        width: 1px;
        background: #bdbfc2;
    }
`;
const RibbonButton = styled.div`
    display: flex;
    flex-direction: column;
    align-items: center;
    padding: 6px 10px 0;
    background: ${(p) => (p.$active ? "#8ab8fe" : "transparent")};
    color: ${(p) => (p.$disabled ? "#8b8b8b" : "#222")};
`;
const RibbonIconBox = styled.div`
    margin: 0 -10px;
`;
const RibbonLabel = styled.span`
    margin-top: 6px;
    line-height: 24px;
    white-space: nowrap;
`;

const Main = styled.main`
    flex: 1;
    display: flex;
    min-height: 0;
    gap: 9px;
`;
const LeftColumn = styled.aside`
    display: flex;
    flex-direction: column;
    width: 264px;
    flex: none;
`;
const PanelHeader = styled.div`
    display: flex;
    align-items: center;
    height: 35px;
    padding: 0 11px 4px 5px;
    gap: 19px;
`;
const PanelTitle = styled.div`
    flex: 1;
    color: #7b8794;
`;
const PanelAction = styled.div`
    display: flex;
    align-items: center;
`;
const TabStrip = styled.div`
    display: flex;
    height: 24px;
    padding-left: 1px;
    line-height: 21px;
`;
const PanelTab = styled.div`
    padding: 0 3px;
    height: 24px;
    background: ${(p) => (p.$active ? "#fff" : "transparent")};
    border: 1px solid ${(p) => (p.$active ? "#a9adb1" : "transparent")};
    border-bottom: none;
    position: relative;
    z-index: 1;
    &:last-child { padding-left: 4px; }
`;
const TreeBox = styled.div`
    display: flex;
    height: 330px;
    width: 264px;
    margin-top: -1px;
    background: #fff;
    border: 1px solid #a9adb1;
    border-radius: 0 3px 3px 3px;
    overflow: hidden;
`;
const TreeList = styled.div`
    flex: 1;
    padding-top: 6px;
    min-width: 0;
`;
const TreeRow = styled.div`
    display: flex;
    align-items: center;
    height: 26px;
    white-space: nowrap;
    line-height: 26px;
    color: ${(p) => (p.$dim ? "#8f8f8f" : "#222")};
`;
const GUIDE_BG = {
    v: "linear-gradient(#dcdcdc,#dcdcdc) center / 1px 100% no-repeat",
    l: "linear-gradient(#dcdcdc,#dcdcdc) 15px 0 / 1px 50% no-repeat, linear-gradient(#dcdcdc,#dcdcdc) 15px 50% / 15px 1px no-repeat",
    t: "linear-gradient(#dcdcdc,#dcdcdc) 15px 0 / 1px 100% no-repeat, linear-gradient(#dcdcdc,#dcdcdc) 15px 50% / 15px 1px no-repeat",
};
const GuideCell = styled.span`
    display: flex;
    align-items: center;
    justify-content: center;
    flex: none;
    width: 30px;
    height: 26px;
    background: ${(p) => GUIDE_BG[p.$kind] || "none"};
`;
const Toggle = styled.span`
    position: relative;
    width: 14px;
    height: 14px;
    border: 1px solid #b0b4b8;
    border-radius: 50%;
    background: #fff;
    &::before {
        content: "";
        position: absolute;
        left: 3px;
        top: 5.5px;
        width: 6px;
        height: 1px;
        background: #555;
    }
    &::after {
        content: "";
        position: absolute;
        left: 5.5px;
        top: 3px;
        width: 1px;
        height: 6px;
        background: ${(p) => (p.$plus ? "#555" : "transparent")};
    }
`;
const TreeIconSlot = styled.span`
    display: flex;
    align-items: center;
    flex: none;
    width: 33px;
    padding-left: 4px;
`;
const VScroll = styled.div`
    display: flex;
    flex-direction: column;
    align-items: center;
    flex: none;
    width: 10px;
    margin-right: 1px;
    padding: 17px 0 3px;
`;
const VThumb = styled.div`
    width: 6px;
    height: 173px;
    margin: 2px 0 auto;
    background: #aeb2b6;
`;
const ARROWS = {
    up: "border-width: 0 4px 5px; border-color: transparent transparent #6f7882;",
    down: "border-width: 5px 4px 0; border-color: #6f7882 transparent transparent;",
    left: "border-width: 4px 5px 4px 0; border-color: transparent #6f7882 transparent transparent;",
    right: "border-width: 4px 0 4px 5px; border-color: transparent transparent transparent #6f7882;",
};
const ScrollArrow = styled.span`
    flex: none;
    width: 0;
    height: 0;
    border-style: solid;
    ${(p) => ARROWS[p.$dir]}
`;
const PropBox = styled.div`
    flex: 1;
    display: flex;
    flex-direction: column;
    margin-top: 6px;
    background: #ebedef;
    border: 1px solid #a9adb1;
    border-top: none;
    border-radius: 0 0 3px 3px;
    min-height: 0;
`;
const PropHead = styled.div`
    display: grid;
    grid-template-columns: 150px 1fr;
    height: 26px;
    line-height: 25px;
    background: #aaaeb1;
    border-bottom: 1px solid #8c9094;
    border-radius: 3px 3px 0 0;
`;
const PropHeadCell = styled.div`
    padding-left: ${(p) => (p.$last ? "12px" : "11px")};
    border-right: ${(p) => (p.$last ? "none" : "1px solid #93979b")};
`;
const PropSection = styled.div`
    height: 29px;
    padding-left: 33px;
    line-height: 29px;
    font-weight: 700;
    color: #6d7d93;
    background: #b9cde1;
`;
const PropRow = styled.div`
    display: grid;
    grid-template-columns: 150px 1fr;
    height: 28px;
    line-height: 27px;
    background: #fff;
`;
const PropKey = styled.div`
    padding-left: 33px;
    border-right: 1px solid #d2d4d6;
    border-bottom: 1px solid #d2d4d6;
    background:
        linear-gradient(#d8d8d8, #d8d8d8) 14px 0 / 1px 50% no-repeat,
        linear-gradient(#d8d8d8, #d8d8d8) 14px 50% / 16px 1px no-repeat;
`;
const PropValue = styled.div`
    padding-left: 3px;
    border-bottom: 1px solid #d2d4d6;
`;
const HScroll = styled.div`
    display: flex;
    align-items: center;
    gap: 4px;
    margin-top: auto;
    height: 14px;
    margin-bottom: 3px;
    padding: 0 4px;
`;
const HThumb = styled.div`
    width: 204px;
    height: 13px;
    margin-right: auto;
    background: #aeb2b6;
`;
const BottomTabs = styled.div`
    display: flex;
    align-items: flex-end;
    gap: 4px;
    height: 26px;
    padding-left: 2px;
    background: #fff;
    line-height: 24px;
`;
const BottomTab = styled.div`
    padding: 0 ${(p) => (p.$active ? "3px" : "1px")};
    height: 24px;
    background: ${(p) => (p.$active ? "#aaaeb1" : "transparent")};
    border: 1px solid ${(p) => (p.$active ? "#85898d" : "transparent")};
    border-bottom: none;
`;

const RightColumn = styled.section`
    flex: 1;
    display: flex;
    flex-direction: column;
    min-width: 0;
`;
const Toolbar = styled.div`
    display: flex;
    align-items: center;
    height: 43px;
    background: #fff;
    border-bottom: 2px solid #b9bcc0;
`;
const ToolBtn = styled.div`
    display: flex;
    align-items: center;
    justify-content: center;
    flex: none;
    width: ${(p) => p.$w}px;
    height: 39px;
    margin-left: ${(p) => p.$ml}px;
    background: ${(p) => (p.$on ? "#cce4fb" : "transparent")};
    border-radius: ${(p) => (p.$on ? "2px" : "0")};
`;
const ToolSep = styled.div`
    flex: none;
    width: 1px;
    height: 33px;
    margin-left: ${(p) => p.$ml}px;
    background: #c6c9cd;
`;
const Viewport = styled.div`
    position: relative;
    flex: 1;
    border-left: 1px solid #a9adb1;
    background: linear-gradient(#b9cde2, #e8ebee);
`;
const ModelShape = styled.svg`
    position: absolute;
    left: 751px;
    top: 375px;
`;
const Triad = styled.svg`
    position: absolute;
    left: 50px;
    top: 640px;
`;
const DocTabBar = styled.div`
    display: flex;
    height: 24px;
    border-left: 1px solid #a9adb1;
    background: #ebedef;
`;
const DocTab = styled.div`
    display: flex;
    align-items: center;
    height: 24px;
    width: 247px;
    background: #fff;
    border-right: 1px solid #a9adb1;
    border-top: 1px solid #a9adb1;
`;
const DocTabIcon = styled.div`
    display: flex;
    align-items: center;
    justify-content: center;
    width: 24px;
    height: 24px;
    background: #1a73e8;
`;
const DocTabText = styled.span`
    margin-left: 10px;
    line-height: 22px;
    white-space: nowrap;
`;

const StatusBar = styled.footer`
    display: flex;
    justify-content: space-between;
    flex: none;
    height: 25px;
    padding: 5px 0 0 5px;
    line-height: 26px;
    overflow: hidden;
    border-top: 1px solid #aaaeb1;
    background: #ebedef;
`;
const StatusLeft = styled.span`
    color: #8a8a8a;
`;
const StatusRight = styled.span`
    font-size: 19.5px;
    white-space: nowrap;
`;

export default App;
